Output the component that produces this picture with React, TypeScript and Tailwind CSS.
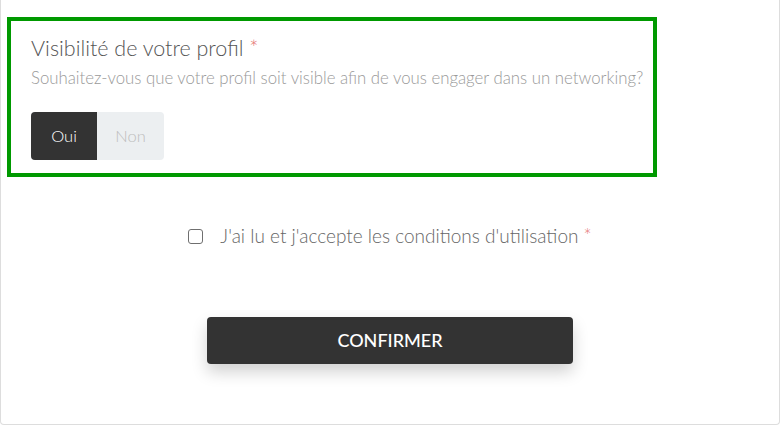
import { useState } from "react";

const App = () => {
  const [visible, setVisible] = useState(true);
  const [accepted, setAccepted] = useState(false);

  return (
    <div className="h-[426px] w-[781px] overflow-hidden bg-white font-['Lato',sans-serif]">
      <div className="h-[425px] w-[780px] rounded-b-[4px] border border-t-0 border-[#dddddd] pt-[17px]">
        {/* profile visibility block */}
        <div className="ml-[6px] h-[160px] w-[650px] border-4 border-[#009900] pl-[20px] pr-[6px] pt-[12px]">
          <h3 className="text-[21.5px] leading-[30px] font-light text-[#555555]">
            Visibilité de votre profil <span className="text-[#e57373]">*</span>
          </h3>
          <p className="mt-[4px] whitespace-nowrap text-[16.8px] leading-[22px] font-light text-[#9a9a9a]">
            Souhaitez-vous que votre profil soit visible afin de vous engager dans un networking?
          </p>
          <div className="mt-[23px] flex h-[48px] w-[133px] overflow-hidden rounded-[4px] bg-[#eceff1]">
            <button
              onClick={() => setVisible(true)}
              className={`w-[66px] text-[16.5px] font-light ${visible ? "bg-[#333333] text-white" : "text-[#bdbdbd]"}`}
            >
              Oui
            </button>
            <button
              onClick={() => setVisible(false)}
              className={`w-[67px] text-[16.5px] font-light ${!visible ? "bg-[#333333] text-white" : "text-[#bdbdbd]"}`}
            >
              Non
            </button>
          </div>
        </div>

        {/* terms */}
        <label className="mt-[45px] flex items-center justify-center gap-[17px] text-[19px] font-light text-[#666666]">
          <input
            type="checkbox"
            checked={accepted}
            onChange={(e) => setAccepted(e.target.checked)}
            className="h-[15px] w-[15px] appearance-none rounded-[3px] border border-[#6f6f6f] bg-white"
          />
          <span>
            J&apos;ai lu et j&apos;accepte les conditions d&apos;utilisation{" "}
            <span className="text-[#e57373]">*</span>
          </span>
        </label>

        <div className="mt-[66px] flex justify-center">
          <button className="h-[47px] w-[366px] rounded-[4px] bg-[#333333] text-[18px] font-medium text-white shadow-[0_8px_16px_rgba(0,0,0,0.18)]">
            CONFIRMER
          </button>
        </div>
      </div>
    </div>
  );
};

export default App;
